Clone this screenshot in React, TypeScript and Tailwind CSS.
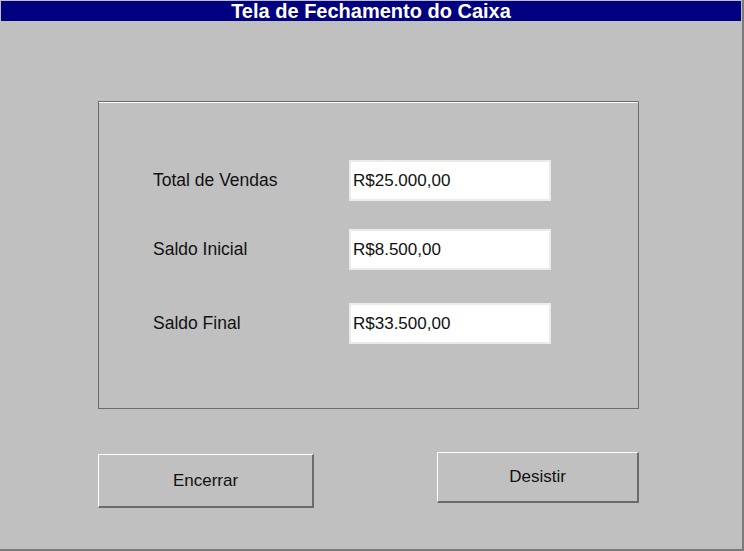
import React from "react";

export default function App() {
  const rows = [
    { label: "Total de Vendas", value: "R$25.000,00", mt: "mt-0" },
    { label: "Saldo Inicial", value: "R$8.500,00", mt: "mt-[28px]" },
    { label: "Saldo Final", value: "R$33.500,00", mt: "mt-[33px]" },
  ];
  return (
    <div className="w-[744px] h-[551px] bg-[#c0c0c0] border-r-2 border-b-2 border-[#7b7b7b] flex flex-col font-['Liberation_Sans',Arial,sans-serif] text-[#111]">
      <div className="mt-[1px] mx-[1px] h-[20px] bg-[#000080] text-white font-bold text-[20px] leading-[20px] text-center">
        Tela de Fechamento do Caixa
      </div>
      <div className="ml-[98px] mt-[80px] w-[541px] h-[308px] border border-[#6b6b6b] shadow-[inset_0_1px_0_#ffffff] flex flex-col pl-[54px] pt-[58px]">
        {rows.map((r) => (
          <div key={r.label} className={`flex items-center h-[41px] ${r.mt}`}>
            <div className="w-[196px] text-[17.5px] leading-[20px] -mt-[1px]">{r.label}</div>
            <div className="w-[202px] h-[41px] bg-white border-2 border-[#ebebeb] pl-[2px] flex items-center text-[17px] leading-[20px]">
              {r.value}
            </div>
          </div>
        ))}
      </div>
      <div className="flex items-start mt-[43px]">
        <button className="ml-[98px] mt-[2px] w-[216px] h-[54px] border-t border-l border-white border-b-2 border-r-2 border-b-[#6b6b6b] border-r-[#6b6b6b] flex items-center justify-center text-[17px] leading-[20px] bg-[#c0c0c0]">
          Encerrar
        </button>
        <button className="ml-[123px] w-[202px] h-[51px] border-t border-l border-white border-b-2 border-r-2 border-b-[#6b6b6b] border-r-[#6b6b6b] flex items-center justify-center text-[17px] leading-[20px] bg-[#c0c0c0]">
          Desistir
        </button>
      </div>
    </div>
  );
}
